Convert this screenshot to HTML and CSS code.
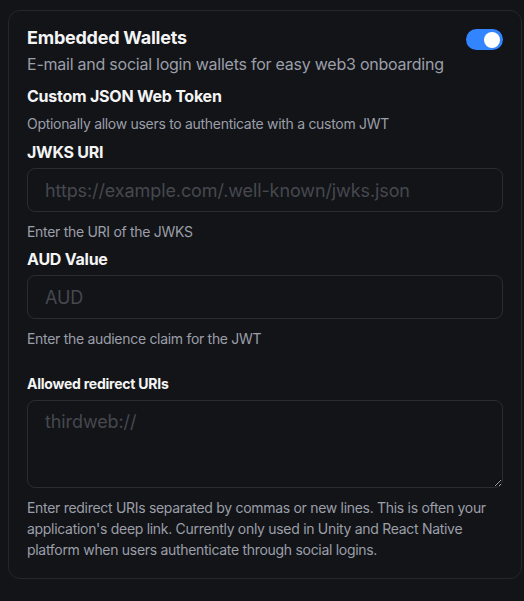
FILE: index.html
```html
<!DOCTYPE html>
<html lang="en">
<head>
<meta charset="utf-8">
<link rel="stylesheet" href="styles.css">
</head>
<body>
<section class="card">
  <div class="header">
    <div class="header-text">
      <h2 class="title">Embedded Wallets</h2>
      <p class="subtitle">E-mail and social login wallets for easy web3 onboarding</p>
    </div>
    <span class="switch" role="switch" aria-checked="true"><span class="knob"></span></span>
  </div>

  <h3 class="section-title">Custom JSON Web Token</h3>
  <p class="section-desc">Optionally allow users to authenticate with a custom JWT</p>

  <label class="label" for="jwks">JWKS URI</label>
  <input id="jwks" class="input" type="text" placeholder="https://example.com/.well-known/jwks.json">
  <p class="helper">Enter the URI of the JWKS</p>

  <label class="label" for="aud">AUD Value</label>
  <input id="aud" class="input" type="text" placeholder="AUD">
  <p class="helper">Enter the audience claim for the JWT</p>

  <label class="label small" for="redirect">Allowed redirect URIs</label>
  <textarea id="redirect" class="textarea" placeholder="thirdweb://"></textarea>
  <p class="helper long">Enter redirect URIs separated by commas or new lines. This is often your application's deep link. Currently only used in Unity and React Native platform when users authenticate through social logins.</p>
</section>
</body>
</html>
```

FILE: styles.css
```css
html, body {
  background: #131418;
}
body {
  margin: 10px 0 0 8px;
  font-family: Inter, "Noto Sans", sans-serif;
  color: #f2f2f3;
  letter-spacing: -0.015em;
}
.card {
  box-sizing: border-box;
  width: 514px;
  border: 1px solid #26272c;
  border-radius: 12px;
  background: #131418;
  padding: 13px 18px 18px;
  display: flex;
  flex-direction: column;
}
.header {
  display: flex;
  justify-content: space-between;
  align-items: flex-start;
}
.title {
  margin: 0;
  font-size: 18px;
  line-height: 28px;
  font-weight: 700;
  color: #f4f4f5;
}
.subtitle {
  margin: 0;
  font-size: 16px;
  line-height: 24px;
  color: #9b9fa8;
}
.switch {
  position: relative;
  margin-top: 5px;
  width: 37px;
  height: 21px;
  border-radius: 11px;
  background: #3385ff;
  flex-shrink: 0;
}
.knob {
  position: absolute;
  right: 3px;
  top: 2.5px;
  width: 16px;
  height: 16px;
  border-radius: 50%;
  background: #ffffff;
}
.section-title {
  margin: 8px 0 0;
  font-size: 16px;
  line-height: 24px;
  font-weight: 700;
  color: #f4f4f5;
}
.section-desc {
  margin: 6px 0 0;
  font-size: 14px;
  line-height: 20px;
  letter-spacing: -0.3px;
  color: #9b9fa8;
}
.label {
  margin: 6px 0 4px;
  font-size: 16px;
  line-height: 24px;
  font-weight: 700;
  color: #f4f4f5;
}
.helper + .label {
  margin-top: 5px;
}
.helper + .label.small {
  margin: 25px 0 6px;
  font-size: 14px;
  line-height: 20px;
}
.input,
.textarea {
  box-sizing: border-box;
  width: 100%;
  margin: 0;
  border: 1px solid #2a2c31;
  border-radius: 8px;
  background: transparent;
  color: #e4e4e7;
  font-family: Inter, "Noto Sans", sans-serif;
  font-size: 18px;
  letter-spacing: -0.1px;
  outline: none;
  color-scheme: dark;
}
.input {
  height: 44px;
  padding: 0 17px;
}
.textarea {
  height: 88px;
  padding: 8px 17px;
  line-height: 26px;
  resize: vertical;
}
.input::placeholder,
.textarea::placeholder {
  color: #45484f;
}
.helper {
  margin: 10px 0 0;
  font-size: 14px;
  line-height: 20px;
  letter-spacing: -0.3px;
  color: #9b9fa8;
}
.helper.long {
  margin-top: 9px;
  line-height: 21px;
}
```
